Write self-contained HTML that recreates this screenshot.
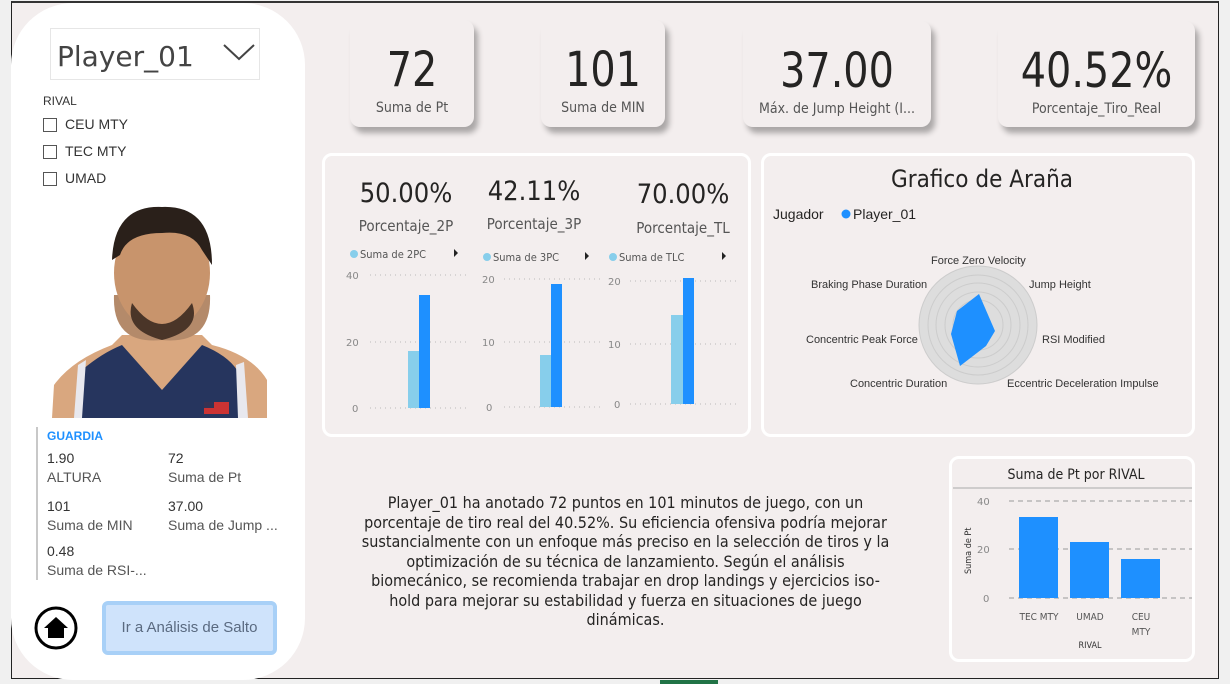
<!DOCTYPE html>
<html><head><meta charset="utf-8"><style>
*{margin:0;padding:0;box-sizing:border-box}
body{width:1230px;height:684px;background:#f0f0f0;font-family:"Liberation Sans","DejaVu Sans",sans-serif;position:relative;overflow:hidden;color:#252423}
.a{position:absolute}
#frame{left:11px;top:1px;width:1208px;height:678px;background:#f3eeee;border:1px solid #222;border-top:2px solid #333}
#left{left:11px;top:3px;width:294px;height:677px;background:#fff;border-radius:62px}
.kpi{background:#f3eeee;border-radius:10px;box-shadow:4px 6px 6px rgba(0,0,0,.3);text-align:center}
.kpi .v{font-family:"DejaVu Sans Condensed",sans-serif;font-size:48px;line-height:52px;margin-top:24px;transform:scaleX(.92)}
.kpi .l{font-family:"DejaVu Sans Condensed",sans-serif;font-size:14px;color:#555;margin-top:4px;white-space:nowrap}
.panel{border:3px solid #fff;border-radius:10px;background:#f3eeee}
.cb{width:14px;height:14px;border:1px solid #555;display:inline-block;vertical-align:middle;margin-right:8px}
.sm{font-size:14px;color:#333}
.g{fill:#888;font-size:10px;font-family:"DejaVu Sans",sans-serif}
</style></head><body>
<div class="a" id="frame"></div>
<div class="a" id="left"></div>
<div class="a" style="left:50px;top:28px;width:210px;height:52px;border:1px solid #e6e6e6;font-size:28px;color:#444;padding:11px 0 0 6px;font-family:'DejaVu Sans',sans-serif">Player_01</div>
<svg class="a" style="left:222px;top:42px" width="34" height="20"><path d="M2 3 L17 17 L32 3" fill="none" stroke="#444" stroke-width="2"/></svg>
<div class="a" style="left:43px;top:94px;font-size:12px;color:#333">RIVAL</div>
<div class="a sm" style="left:43px;top:116px"><span class="cb"></span>CEU MTY</div>
<div class="a sm" style="left:43px;top:143px"><span class="cb"></span>TEC MTY</div>
<div class="a sm" style="left:43px;top:170px"><span class="cb"></span>UMAD</div>
<svg class="a" style="left:52px;top:205px" width="215" height="213">
<path d="M0 213 L2 180 Q20 155 60 140 L70 130 L150 130 L160 140 Q200 150 215 175 L215 213Z" fill="#d9a77f"/>
<path d="M28 213 L30 165 Q50 148 70 140 L110 185 L150 140 Q175 150 185 165 L190 213Z" fill="#26355e"/>
<path d="M22 213 L26 160 L34 155 L30 213Z M186 213 L184 160 L192 157 L196 213Z" fill="#e8e8ee"/>
<rect x="152" y="197" width="25" height="12" fill="#c33"/><rect x="152" y="197" width="10" height="6" fill="#335"/>
<path d="M62 90 Q60 140 110 135 Q160 140 158 90 Z" fill="#b48a6a"/>
<ellipse cx="110" cy="68" rx="48" ry="58" fill="#c8946c"/>
<path d="M80 98 Q110 140 140 98 Q150 125 110 135 Q72 125 80 98Z" fill="#4a3528"/>
<path d="M60 55 Q62 0 110 2 Q160 0 160 60 L150 45 Q140 25 110 28 Q75 28 68 50Z" fill="#2a201a"/>
</svg>
<div class="a" style="left:36px;top:427px;width:2px;height:153px;background:#c8c8c8"></div>
<div class="a" style="left:47px;top:429px;font-size:12px;color:#1e90ff;font-weight:bold">GUARDIA</div>
<div class="a sm" style="left:47px;top:449px;line-height:19px">1.90<br><span style="color:#555">ALTURA</span></div>
<div class="a sm" style="left:168px;top:449px;line-height:19px">72<br><span style="color:#555">Suma de Pt</span></div>
<div class="a sm" style="left:47px;top:497px;line-height:19px">101<br><span style="color:#555">Suma de MIN</span></div>
<div class="a sm" style="left:168px;top:497px;line-height:19px">37.00<br><span style="color:#555">Suma de Jump ...</span></div>
<div class="a sm" style="left:47px;top:542px;line-height:19px">0.48<br><span style="color:#555">Suma de RSI-...</span></div>
<svg class="a" style="left:34px;top:606px" width="44" height="44"><circle cx="22" cy="22" r="20" fill="#fff" stroke="#000" stroke-width="3"/><path d="M10 22 L22 11 L34 22 L30 22 L30 32 L14 32 L14 22Z" fill="#000"/></svg>
<div class="a" style="left:102px;top:601px;width:175px;height:54px;background:#cfe3fb;border:4px solid #a8d0f7;border-radius:6px;font-size:15px;color:#5a6a80;text-align:center;line-height:46px">Ir a Análisis de Salto</div>

<div class="a kpi" style="left:350px;top:20px;width:124px;height:107px"><div class="v">72</div><div class="l">Suma de Pt</div></div>
<div class="a kpi" style="left:541px;top:20px;width:124px;height:107px"><div class="v">101</div><div class="l">Suma de MIN</div></div>
<div class="a kpi" style="left:743px;top:21px;width:188px;height:106px"><div class="v">37.00</div><div class="l">Máx. de Jump Height (I...</div></div>
<div class="a kpi" style="left:998px;top:21px;width:197px;height:106px"><div class="v">40.52%</div><div class="l">Porcentaje_Tiro_Real</div></div>

<div class="a panel" style="left:322px;top:153px;width:429px;height:284px"></div>
<svg class="a" style="left:322px;top:153px" width="429" height="284" font-family="DejaVu Sans Condensed,sans-serif">
<g font-size="27" fill="#252423" text-anchor="middle"><text x="84" y="49">50.00%</text><text x="212" y="47">42.11%</text><text x="361" y="50">70.00%</text></g>
<g font-size="15" fill="#555" text-anchor="middle"><text x="84" y="78">Porcentaje_2P</text><text x="212" y="76">Porcentaje_3P</text><text x="361" y="80">Porcentaje_TL</text></g>
<g font-size="11" fill="#555"><circle cx="32" cy="101" r="4" fill="#87ceeb"/><text x="38" y="105">Suma de 2PC</text>
<circle cx="165" cy="104" r="4" fill="#87ceeb"/><text x="171" y="108">Suma de 3PC</text>
<circle cx="291" cy="104" r="4" fill="#87ceeb"/><text x="297" y="108">Suma de TLC</text></g>
<g fill="#222"><path d="M132 96 l4 4 -4 4z"/><path d="M263 99 l4 4 -4 4z"/><path d="M400 99 l4 4 -4 4z"/></g>
<g stroke="#bbb" stroke-dasharray="1 4"><path d="M48 122 H148 M48 189 H148 M48 255 H148 M182 126 H278 M182 189 H278 M182 254 H278 M308 128 H418 M308 191 H418 M308 251 H418"/></g>
<g class="g"><text x="24" y="126">40</text><text x="24" y="193">20</text><text x="30" y="259">0</text>
<text x="160" y="130">20</text><text x="160" y="193">10</text><text x="164" y="258">0</text>
<text x="286" y="132">20</text><text x="286" y="195">10</text><text x="292" y="255">0</text></g>
<rect x="86" y="198" width="11" height="57" fill="#87ceeb"/><rect x="97" y="142" width="11" height="113" fill="#1e90ff"/>
<rect x="218" y="202" width="11" height="52" fill="#87ceeb"/><rect x="229" y="131" width="11" height="123" fill="#1e90ff"/>
<rect x="349" y="162" width="12" height="89" fill="#87ceeb"/><rect x="361" y="125" width="11" height="126" fill="#1e90ff"/>
</svg>

<div class="a panel" style="left:761px;top:153px;width:434px;height:284px"></div>
<svg class="a" style="left:761px;top:153px" width="434" height="284" font-family="DejaVu Sans,sans-serif">
<text x="221" y="34" text-anchor="middle" font-size="24" fill="#252423" font-family="DejaVu Sans Condensed,sans-serif">Grafico de Araña</text>
<text x="12" y="66" font-size="14" fill="#252423" font-family="Liberation Sans,sans-serif">Jugador</text>
<circle cx="85" cy="61" r="4.5" fill="#1e90ff"/><text x="92" y="66" font-size="14" fill="#252423" font-family="Liberation Sans,sans-serif">Player_01</text>
<circle cx="217" cy="172" r="59" fill="#ddd" stroke="#ccc"/><circle cx="217" cy="172" r="50" fill="none" stroke="#ccc"/><circle cx="217" cy="172" r="42" fill="none" stroke="#ccc"/><circle cx="217" cy="172" r="33" fill="none" stroke="#ccc"/><circle cx="217" cy="172" r="25" fill="none" stroke="#ccc"/>
<path d="M218 141 L234 178 L225 193 L199 213 L190 181 L196 158Z" fill="#1e90ff"/>
<g font-size="11" fill="#333" font-family="Liberation Sans,sans-serif">
<text x="170" y="111">Force Zero Velocity</text><text x="268" y="135">Jump Height</text>
<text x="50" y="135">Braking Phase Duration</text><text x="281" y="190">RSI Modified</text>
<text x="45" y="190">Concentric Peak Force</text><text x="89" y="234">Concentric Duration</text>
<text x="246" y="234">Eccentric Deceleration Impulse</text></g>
</svg>

<div class="a" style="left:358px;top:493px;width:535px;text-align:center;font-size:16px;line-height:19.5px;color:#252423;font-family:'DejaVu Sans Condensed','Liberation Sans',sans-serif">Player_01 ha anotado 72 puntos en 101 minutos de juego, con un porcentaje de tiro real del 40.52%. Su eficiencia ofensiva podría mejorar sustancialmente con un enfoque más preciso en la selección de tiros y la optimización de su técnica de lanzamiento. Según el análisis biomecánico, se recomienda trabajar en drop landings y ejercicios iso-hold para mejorar su estabilidad y fuerza en situaciones de juego dinámicas.</div>

<div class="a panel" style="left:949px;top:456px;width:246px;height:206px"></div>
<svg class="a" style="left:949px;top:456px" width="246" height="206" font-family="DejaVu Sans Condensed,sans-serif">
<text x="127" y="23" text-anchor="middle" font-size="14" fill="#252423">Suma de Pt por RIVAL</text>
<path d="M4 32 H243" stroke="#aaa"/>
<g stroke="#999" stroke-dasharray="5 4"><path d="M60 45 H243 M60 93 H243 M60 142 H243"/></g>
<g class="g"><text x="28" y="49">40</text><text x="28" y="97">20</text><text x="34" y="146">0</text></g>
<text transform="translate(22 118) rotate(-90)" font-size="9" fill="#333">Suma de Pt</text>
<rect x="70" y="61" width="39" height="81" fill="#1e90ff"/><rect x="121" y="86" width="39" height="56" fill="#1e90ff"/><rect x="172" y="103" width="39" height="39" fill="#1e90ff"/>
<g font-size="10" fill="#555" text-anchor="middle"><text x="90" y="164">TEC MTY</text><text x="141" y="164">UMAD</text><text x="192" y="164">CEU</text><text x="192" y="179">MTY</text></g>
<text x="141" y="192" text-anchor="middle" font-size="9" fill="#333">RIVAL</text>
</svg>
<div class="a" style="left:660px;top:680px;width:58px;height:4px;background:#217346"></div>
</body></html>
